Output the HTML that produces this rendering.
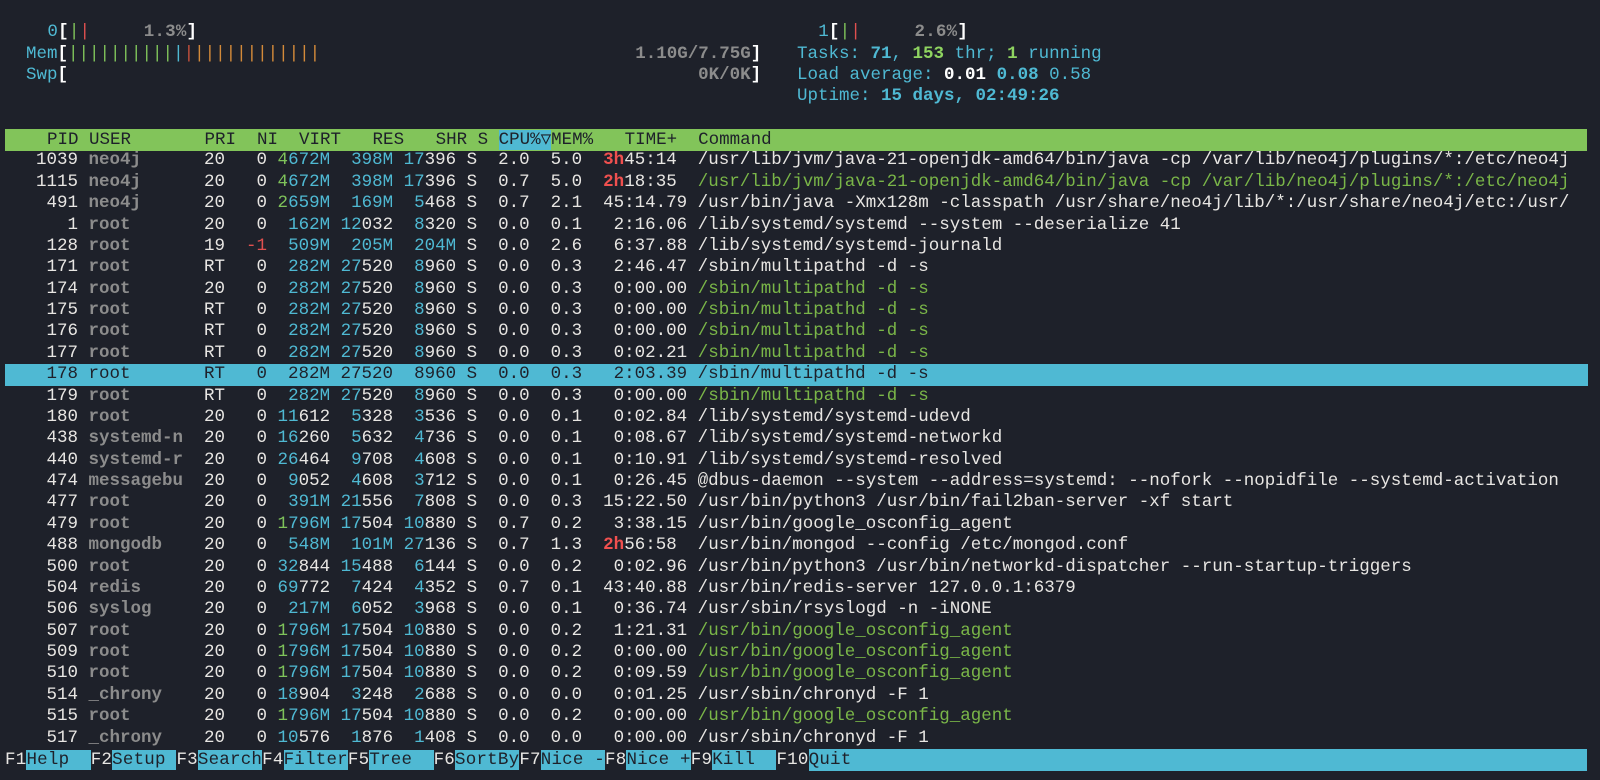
<!DOCTYPE html>
<html><head><meta charset="utf-8">
<style>
html,body{margin:0;padding:0;background:#1e212a;width:1600px;height:780px;overflow:hidden}
body{font-family:"Liberation Mono","DejaVu Sans Mono",monospace;font-size:17.5px;color:#e8e6e3;position:relative}
.l{position:absolute;white-space:pre;line-height:21.38px;height:21.38px}
i{font-style:normal}
.c{color:#4fb9d3}
.g{color:#7fc35a}
.r{color:#f0504f;font-weight:bold}
.rn{color:#e0504f}
.u{color:#8c8c8c;font-weight:bold}
.t{color:#7ab648}
.w{color:#ffffff;font-weight:bold}
.gy{color:#8c8c8c;font-weight:bold}
.bc{color:#4fb9d3;font-weight:bold}
.bg{color:#8fd460;font-weight:bold}
.o{color:#d38a3a}
.rb{color:#c4503c}
.rows{position:absolute;left:4.5px;top:150.4px;width:1583px;overflow:hidden}
.rows div{white-space:pre;height:21.38px;line-height:21.38px;overflow:hidden}
.hdr{position:absolute;left:5px;top:129px;width:1582px;height:22px;background:#82c45a;color:#1e212a;white-space:pre;line-height:22px;overflow:hidden}
.sel{background:#4fb9d3;color:#1e212a}
.fb{position:absolute;left:5px;top:749px;width:1582px;height:22px;white-space:pre;line-height:22px;overflow:hidden;letter-spacing:0.21px}
.k{background:#4fb9d3;color:#1e212a}
</style></head><body>

<div class="l" style="left:26px;top:22px;letter-spacing:0.2px">  <i class="c">0</i><i class="w">[</i><i class="g">|</i><i class="rn">|</i>     <i class="gy">1.3%</i><i class="w">]</i></div>
<div class="l" style="left:26px;top:43.5px"><i class="c">Mem</i><i class="w">[</i><i class="g">||||||||||</i><i class="c">|</i><i class="rb">|</i><i class="o">||||||||||||</i>                              <i class="gy">1.10G/7.75G</i><i class="w">]</i></div>
<div class="l" style="left:26px;top:64.8px"><i class="c">Swp</i><i class="w">[</i>                                                            <i class="gy">0K/0K</i><i class="w">]</i></div>

<div class="l" style="left:807.5px;top:22px;letter-spacing:0.2px"> <i class="c">1</i><i class="w">[</i><i class="g">|</i><i class="rn">|</i>     <i class="gy">2.6%</i><i class="w">]</i></div>
<div class="l c" style="left:797px;top:43.5px">Tasks: <i class="bc">71</i>, <i class="bg">153</i> thr; <i class="bg">1</i> running</div>
<div class="l c" style="left:797px;top:64.8px">Load average: <i class="w">0.01</i> <i class="bc">0.08</i> 0.58</div>
<div class="l c" style="left:797px;top:86.2px">Uptime: <i class="bc">15 days, 02:49:26</i></div>

<div class="hdr">    PID USER       PRI  NI  VIRT   RES   SHR S <span style="background:#4fb9d3">CPU%▽</span>MEM%   TIME+  Command</div>

<div class="rows">
<div>   1039 <i class="u">neo4j    </i>  20   0 <i class="g">4</i><i class="c">672M</i>  <i class="c">398M</i> <i class="c">17</i>396 S  2.0  5.0  <i class="r">3h</i>45:14  /usr/lib/jvm/java-21-openjdk-amd64/bin/java -cp /var/lib/neo4j/plugins/*:/etc/neo4j</div>
<div>   1115 <i class="u">neo4j    </i>  20   0 <i class="g">4</i><i class="c">672M</i>  <i class="c">398M</i> <i class="c">17</i>396 S  0.7  5.0  <i class="r">2h</i>18:35  <i class="t">/usr/lib/jvm/java-21-openjdk-amd64/bin/java -cp /var/lib/neo4j/plugins/*:/etc/neo4j</i></div>
<div>    491 <i class="u">neo4j    </i>  20   0 <i class="g">2</i><i class="c">659M</i>  <i class="c">169M</i>  <i class="c">5</i>468 S  0.7  2.1  45:14.79 /usr/bin/java -Xmx128m -classpath /usr/share/neo4j/lib/*:/usr/share/neo4j/etc:/usr/</div>
<div>      1 <i class="u">root     </i>  20   0  <i class="c">162M</i> <i class="c">12</i>032  <i class="c">8</i>320 S  0.0  0.1   2:16.06 /lib/systemd/systemd --system --deserialize 41</div>
<div>    128 <i class="u">root     </i>  19  <i class="rn">-1</i>  <i class="c">509M</i>  <i class="c">205M</i>  <i class="c">204M</i> S  0.0  2.6   6:37.88 /lib/systemd/systemd-journald</div>
<div>    171 <i class="u">root     </i>  RT   0  <i class="c">282M</i> <i class="c">27</i>520  <i class="c">8</i>960 S  0.0  0.3   2:46.47 /sbin/multipathd -d -s</div>
<div>    174 <i class="u">root     </i>  20   0  <i class="c">282M</i> <i class="c">27</i>520  <i class="c">8</i>960 S  0.0  0.3   0:00.00 <i class="t">/sbin/multipathd -d -s</i></div>
<div>    175 <i class="u">root     </i>  RT   0  <i class="c">282M</i> <i class="c">27</i>520  <i class="c">8</i>960 S  0.0  0.3   0:00.00 <i class="t">/sbin/multipathd -d -s</i></div>
<div>    176 <i class="u">root     </i>  RT   0  <i class="c">282M</i> <i class="c">27</i>520  <i class="c">8</i>960 S  0.0  0.3   0:00.00 <i class="t">/sbin/multipathd -d -s</i></div>
<div>    177 <i class="u">root     </i>  RT   0  <i class="c">282M</i> <i class="c">27</i>520  <i class="c">8</i>960 S  0.0  0.3   0:02.21 <i class="t">/sbin/multipathd -d -s</i></div>
<div class="sel">    178 root       RT   0  282M 27520  8960 S  0.0  0.3   2:03.39 /sbin/multipathd -d -s</div>
<div>    179 <i class="u">root     </i>  RT   0  <i class="c">282M</i> <i class="c">27</i>520  <i class="c">8</i>960 S  0.0  0.3   0:00.00 <i class="t">/sbin/multipathd -d -s</i></div>
<div>    180 <i class="u">root     </i>  20   0 <i class="c">11</i>612  <i class="c">5</i>328  <i class="c">3</i>536 S  0.0  0.1   0:02.84 /lib/systemd/systemd-udevd</div>
<div>    438 <i class="u">systemd-n</i>  20   0 <i class="c">16</i>260  <i class="c">5</i>632  <i class="c">4</i>736 S  0.0  0.1   0:08.67 /lib/systemd/systemd-networkd</div>
<div>    440 <i class="u">systemd-r</i>  20   0 <i class="c">26</i>464  <i class="c">9</i>708  <i class="c">4</i>608 S  0.0  0.1   0:10.91 /lib/systemd/systemd-resolved</div>
<div>    474 <i class="u">messagebu</i>  20   0  <i class="c">9</i>052  <i class="c">4</i>608  <i class="c">3</i>712 S  0.0  0.1   0:26.45 @dbus-daemon --system --address=systemd: --nofork --nopidfile --systemd-activation</div>
<div>    477 <i class="u">root     </i>  20   0  <i class="c">391M</i> <i class="c">21</i>556  <i class="c">7</i>808 S  0.0  0.3  15:22.50 /usr/bin/python3 /usr/bin/fail2ban-server -xf start</div>
<div>    479 <i class="u">root     </i>  20   0 <i class="g">1</i><i class="c">796M</i> <i class="c">17</i>504 <i class="c">10</i>880 S  0.7  0.2   3:38.15 /usr/bin/google_osconfig_agent</div>
<div>    488 <i class="u">mongodb  </i>  20   0  <i class="c">548M</i>  <i class="c">101M</i> <i class="c">27</i>136 S  0.7  1.3  <i class="r">2h</i>56:58  /usr/bin/mongod --config /etc/mongod.conf</div>
<div>    500 <i class="u">root     </i>  20   0 <i class="c">32</i>844 <i class="c">15</i>488  <i class="c">6</i>144 S  0.0  0.2   0:02.96 /usr/bin/python3 /usr/bin/networkd-dispatcher --run-startup-triggers</div>
<div>    504 <i class="u">redis    </i>  20   0 <i class="c">69</i>772  <i class="c">7</i>424  <i class="c">4</i>352 S  0.7  0.1  43:40.88 /usr/bin/redis-server 127.0.0.1:6379</div>
<div>    506 <i class="u">syslog   </i>  20   0  <i class="c">217M</i>  <i class="c">6</i>052  <i class="c">3</i>968 S  0.0  0.1   0:36.74 /usr/sbin/rsyslogd -n -iNONE</div>
<div>    507 <i class="u">root     </i>  20   0 <i class="g">1</i><i class="c">796M</i> <i class="c">17</i>504 <i class="c">10</i>880 S  0.0  0.2   1:21.31 <i class="t">/usr/bin/google_osconfig_agent</i></div>
<div>    509 <i class="u">root     </i>  20   0 <i class="g">1</i><i class="c">796M</i> <i class="c">17</i>504 <i class="c">10</i>880 S  0.0  0.2   0:00.00 <i class="t">/usr/bin/google_osconfig_agent</i></div>
<div>    510 <i class="u">root     </i>  20   0 <i class="g">1</i><i class="c">796M</i> <i class="c">17</i>504 <i class="c">10</i>880 S  0.0  0.2   0:09.59 <i class="t">/usr/bin/google_osconfig_agent</i></div>
<div>    514 <i class="u">_chrony  </i>  20   0 <i class="c">18</i>904  <i class="c">3</i>248  <i class="c">2</i>688 S  0.0  0.0   0:01.25 /usr/sbin/chronyd -F 1</div>
<div>    515 <i class="u">root     </i>  20   0 <i class="g">1</i><i class="c">796M</i> <i class="c">17</i>504 <i class="c">10</i>880 S  0.0  0.2   0:00.00 <i class="t">/usr/bin/google_osconfig_agent</i></div>
<div>    517 <i class="u">_chrony  </i>  20   0 <i class="c">10</i>576  <i class="c">1</i>876  <i class="c">1</i>408 S  0.0  0.0   0:00.00 /usr/sbin/chronyd -F 1</div>
</div>

<div class="fb">F1<i class="k">Help  </i>F2<i class="k">Setup </i>F3<i class="k">Search</i>F4<i class="k">Filter</i>F5<i class="k">Tree  </i>F6<i class="k">SortBy</i>F7<i class="k">Nice -</i>F8<i class="k">Nice +</i>F9<i class="k">Kill  </i>F10<i class="k" style="display:inline-block;width:845px">Quit</i></div>

</body></html>
